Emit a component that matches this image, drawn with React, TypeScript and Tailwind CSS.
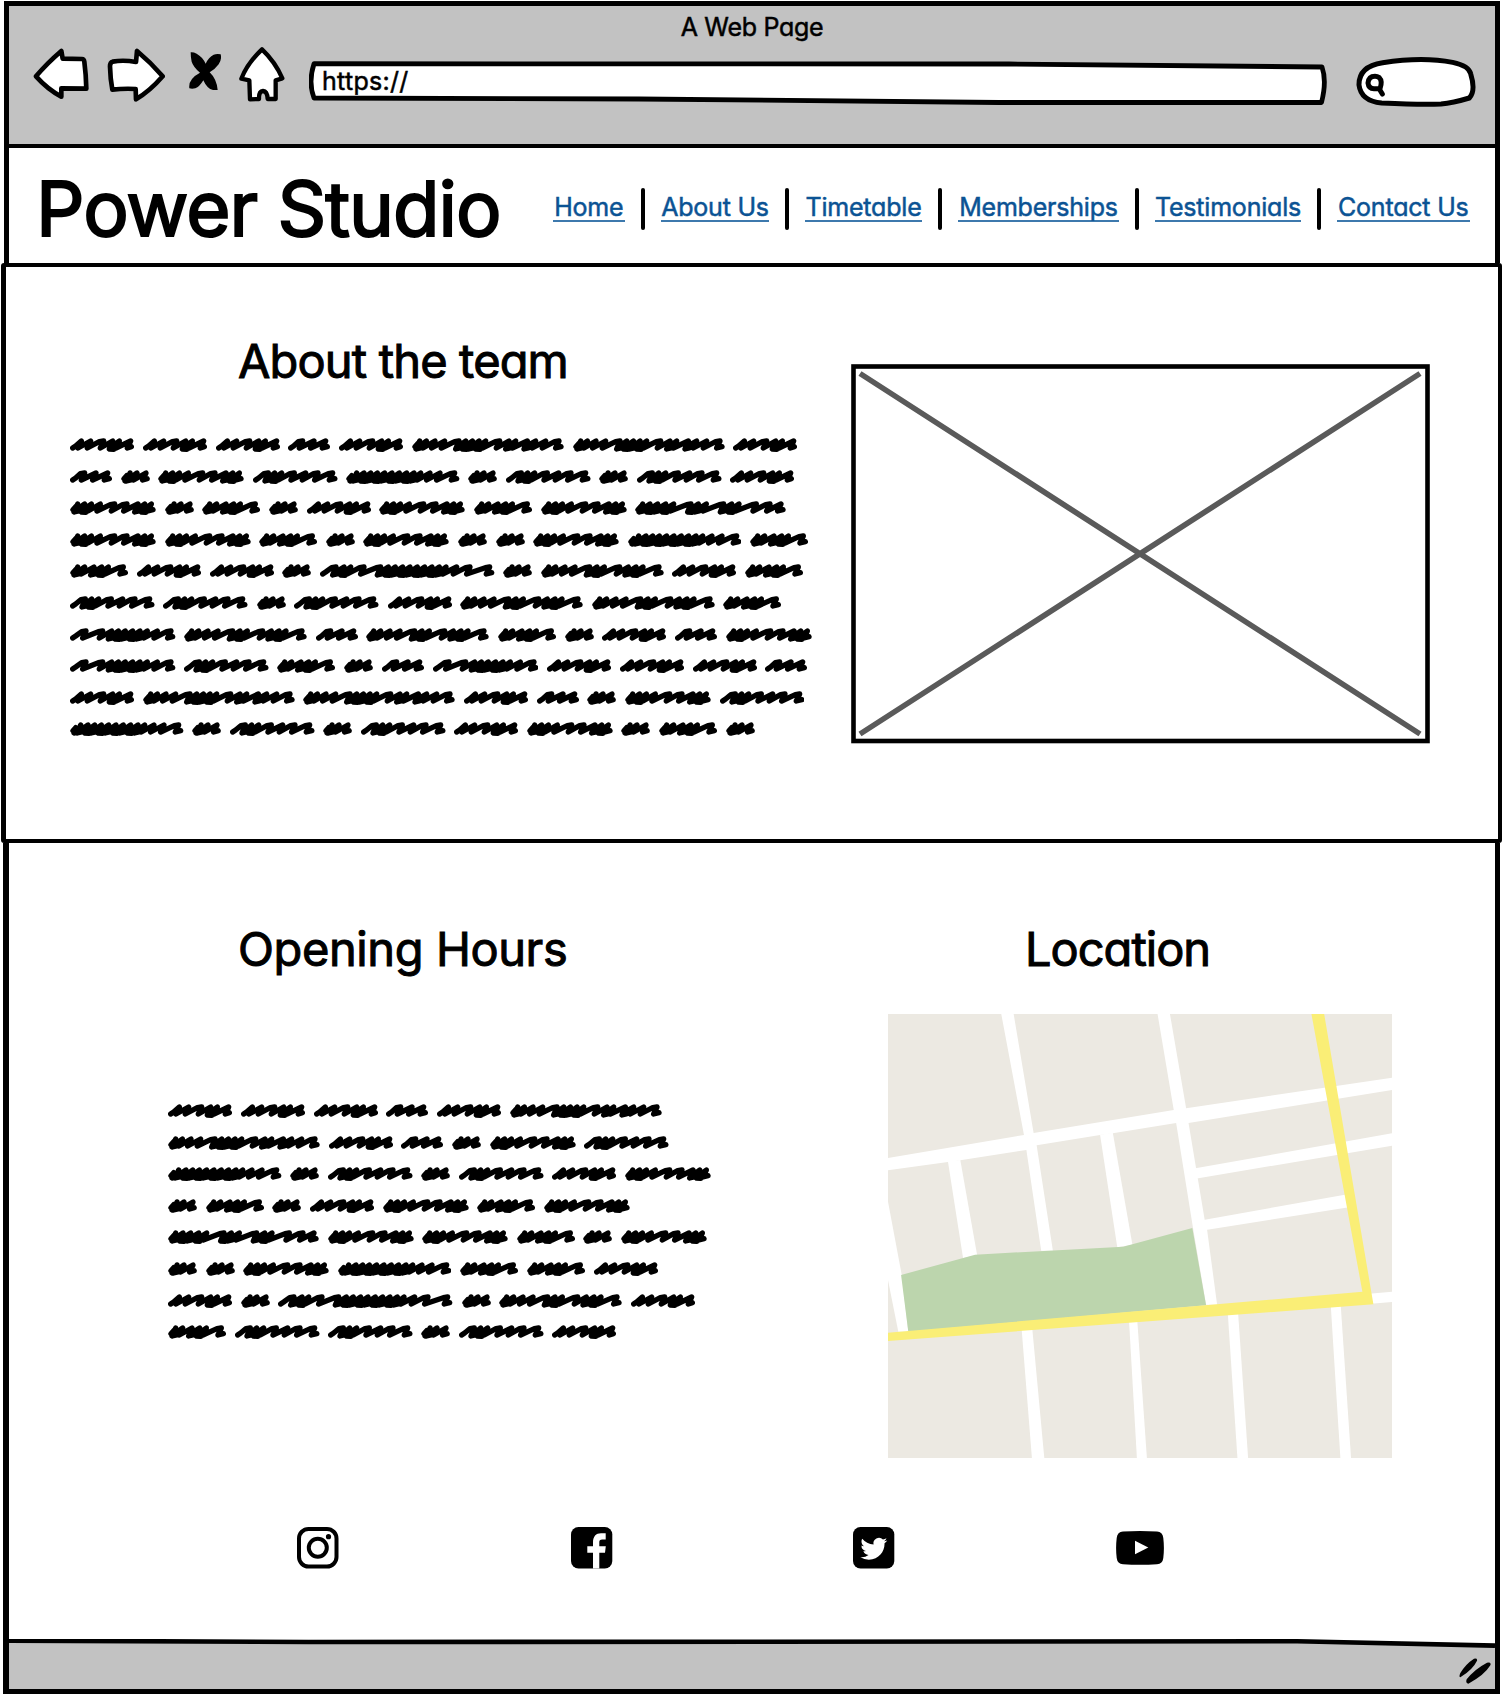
import React from "react";

/* ---------- Scribbled placeholder words ---------- */

// Each word: [width, x positions of the pen's upstroke peaks], in thirds of a pixel.
const WORDS: Record<string, [number, number[]]> = {
  A: [193, [34, 62, 101, 128, 148, 182]],
  B: [127, [44, 78, 113]],
  C: [87.5, [27, 48, 75]],
  D: [258, [23, 44, 64, 91, 134, 171, 204, 224, 244]],
  E: [254.5, [46, 65, 86, 124, 158, 195, 239]],
  F: [341, [32, 54, 74, 94, 116, 138, 160, 182, 204, 224, 252, 282, 326]],
  G: [456, [23, 43, 69, 98, 141, 161, 181, 201, 221, 263, 291, 311, 346, 371, 401, 441]],
  H: [175, [23, 44, 72, 95, 115, 160]],
  I: [524, [48, 72, 92, 132, 182, 205, 226, 248, 270, 292, 314, 336, 358, 378, 410, 450, 509]],
  J: [317, [48, 98, 125, 145, 166, 188, 210, 232, 262, 303]],
  K: [369, [23, 44, 72, 102, 146, 168, 190, 236, 262, 285, 306, 354]],
  L: [453, [23, 45, 68, 92, 116, 168, 190, 214, 266, 290, 312, 364, 405, 438]],
};

function wordPath(width: number, peaks: number[]) {
  const dark = peaks[0] < 33;
  let d = dark ? "M9 26 L17 17 L12 33 L24 28" : "M8 30 L17 24";
  let prev = 0;
  peaks.forEach((p, i) => {
    const gap = p - prev;
    if (gap > 36) d += ` L${p - 13} 11`;
    d += ` L${p} 9`;
    const next = peaks[i + 1] ?? width;
    const close = next - p < 26 && i < peaks.length - 1;
    d += ` L${p - 10} ${close ? 33 : 30}`;
    if (close) d += ` L${p + 3} ${i % 2 ? 34 : 30} L${p + 6} 20`;
    prev = p;
  });
  return d + ` L${width - 9} 26`;
}

function Word({ kind }: { kind: string }) {
  const [w, peaks] = WORDS[kind];
  return (
    <svg width={w / 3} height={14} viewBox={`0 0 ${w} 42`} className="shrink-0" aria-hidden>
      <path d={wordPath(w, peaks)} fill="none" stroke="#000" strokeWidth={16} strokeLinejoin="round" strokeLinecap="round" />
    </svg>
  );
}

function Scribble({ rows }: { rows: string[] }) {
  return (
    <div className="flex flex-col">
      {rows.map((row, i) => (
        <div key={i} className="flex h-[31.6px] items-start gap-[8.5px]">
          {row.split("").map((k, j) => (
            <Word key={j} kind={k} />
          ))}
        </div>
      ))}
    </div>
  );
}

const TEAM = ["AAABAGGA", "BCDEFCECEA", "DCHCADHDL", "DDHCDCCDFH", "HAACICKAH", "EECEAKKH", "JKBKHCABD", "JEHCBJAAAB", "AGGABCDE", "FCECEADCHC"];
const HOURS = ["AAABAG", "GABCDE", "FCECEAD", "CHCADHD", "LDDHCD", "CCDFHHA", "ACICKA", "HEECEA"];

/* ---------- Browser chrome ---------- */

function Chrome() {
  return (
    <header className="flex h-[137.5px] flex-col bg-[#c2c2c2]">
      <div className="flex h-[41px] items-center justify-center pt-px text-[25px] leading-none tracking-[-0.3px] [-webkit-text-stroke:0.5px_#000]">A Web Page</div>
      <div className="flex items-start pl-[24px]">
        <svg width="132" height="56" viewBox="99 138 396 168" fill="#fff" stroke="#000" strokeWidth="14" strokeLinejoin="round">
          <path d="M108 226 Q140 188 184 150 L188 173 L246 174 Q252 174 253 182 Q258 220 259 263 L184 262 L184 287 Q142 264 108 226Z" />
          <path d="M488 226 Q452 184 411 150 L408 183 Q370 176 338 182 Q330 184 330 196 Q331 235 337 266 Q372 262 407 264 L408 295 Q450 270 488 226Z" />
        </svg>
        <svg width="32" height="38" viewBox="569 155 96 114" className="ml-[24px] mt-[4.5px]">
          <path d="M574 156 Q582 155 592 160 Q610 170 619 190 Q628 170 643 163 Q652 160 664 162 Q668 178 658 192 Q648 206 631 216 Q652 236 655 269 Q636 272 625 260 Q616 250 612 240 Q600 260 588 264 Q578 266 570 264 Q568 248 578 236 Q588 224 602 217 Q582 200 577 184 Q574 172 574 156Z" />
        </svg>
        <svg width="46" height="55" viewBox="717 137 138 165" className="ml-[18px]" fill="#fff" stroke="#000" strokeWidth="13" strokeLinejoin="round" strokeLinecap="round">
          <path d="M786 144 Q826 182 847 231 L827 237 L827 293 L803 293 Q802 270 789 269 Q776 270 777 293 L750 294 L748 237 L724 232 Q742 186 786 144Z" />
        </svg>
        <div className="relative ml-[24px] mt-[14px] h-[46px] w-[1018px]">
          <svg className="absolute inset-0" width="1018" height="46" viewBox="0 0 1018 46" fill="#fff" stroke="#000" strokeWidth="4.8" strokeLinejoin="round">
            <path d="M5 2.7 L700 3 L1013 6 Q1018 20 1012.5 41.5 L690 41.5 L330 38 L5 37 Q-1 21 5 2.7Z" />
          </svg>
          <span className="relative ml-[13px] block pt-[8px] text-[25px] leading-none tracking-[0.3px] [-webkit-text-stroke:0.5px_#000]">https://</span>
        </div>
        <svg width="122" height="52" viewBox="1067 167 366 156" className="ml-[28px] mt-[9px]" fill="#fff" stroke="#000" strokeWidth="15" strokeLinejoin="round" strokeLinecap="round">
          <path d="M1147 308 Q1085 302 1079 254 Q1078 198 1150 187 Q1270 168 1360 186 Q1408 196 1414 220 Q1430 272 1410 293 Q1360 308 1325 311 Q1270 314 1147 308Z" />
          <path d="M1127 228 Q1108 228 1106 248 Q1108 266 1126 265 L1142 265 Q1150 242 1140 232 Q1134 228 1127 228Z M1140 266 L1149 281" strokeWidth="15" />
        </svg>
      </div>
    </header>
  );
}

/* ---------- Site header ---------- */

function NavLink({ label, width, last }: { label: string; width: number; last?: boolean }) {
  return (
    <>
      <a className="-mt-[2px] flex h-[27px] items-start justify-center whitespace-nowrap border-b-2 border-[#3d79ad] text-[25px] leading-[25px] tracking-[-0.2px] text-[#0b5394] [-webkit-text-stroke:0.5px_#0b5394]" style={{ width }}>
        {label}
      </a>
      {!last && <span className="h-[42px] w-[4px] rounded-full bg-black" />}
    </>
  );
}

function SiteHeader() {
  return (
    <div className="flex h-[115px] items-start">
      <h1 className="ml-[27px] mt-[21px] w-[503.5px] whitespace-nowrap text-[76px] leading-[79px] tracking-[-1px] [-webkit-text-stroke:2px_#000]">Power Studio</h1>
      <nav className="ml-[13px] mt-[40px] flex items-center gap-[16px]">
        <NavLink label="Home" width={72.5} />
        <NavLink label="About Us" width={108} />
        <NavLink label="Timetable" width={117} />
        <NavLink label="Memberships" width={161} />
        <NavLink label="Testimonials" width={146} />
        <NavLink label="Contact Us" width={132.5} last />
      </nav>
    </div>
  );
}

/* ---------- Location map ---------- */

function StreetMap() {
  return (
    <svg width="504" height="444" viewBox="52 42 1464 1332" preserveAspectRatio="none">
      <rect x="52" y="42" width="1464" height="1332" fill="#ece9e2" />
      <g fill="#fff">
        <path d="M381 42H417L475 399L484 437L531 752H497L454 450L447 405Z" />
        <path d="M835 42H871L918 325L925 369L972 660L979 690L1008 914H976L938 684L889 369L882 330Z" />
        <path d="M52 474L447 405L475 399L882 330L918 325L1516 233V270L925 369L889 369L705 400L668 405L484 436L454 450L262 481L226 486L52 511Z" />
        <path d="M226 484L262 480L311 766L270 774Z" />
        <path d="M668 404L705 398L762 734L718 742Z" />
        <path d="M945 505L1516 400V437L945 536Z" />
        <path d="M968 660L1379 584L1400 620L975 690Z" />
        <path d="M52 605L92 825L111 995H82L52 840Z" />
        <path d="M1450 881L1516 875V906L1455 911Z" />
        <path d="M440 985H471L506 1374H470Z" />
        <path d="M752 960H776L804 1374H775Z" />
        <path d="M1039 940H1069L1098 1374H1067Z" />
        <path d="M1338 915H1367L1397 1374H1366Z" />
      </g>
      <path fill="#bcd5ad" d="M90 825L305 764L735 740L936 684L976 916L111 995Z" />
      <path fill="#faee76" d="M52 998L1430 875L1282 42H1319L1462 913L52 1023Z" />
    </svg>
  );
}

/* ---------- Social icons ---------- */

function Instagram() {
  return (
    <svg width="42" height="42" viewBox="0 0 42 42" fill="none" stroke="#000">
      <rect x="2" y="2" width="37.5" height="37.5" rx="9.5" strokeWidth="4" />
      <circle cx="20.8" cy="20.8" r="9" strokeWidth="4" />
      <circle cx="31.5" cy="9.7" r="2.6" fill="#000" stroke="none" />
    </svg>
  );
}

function Facebook() {
  return (
    <svg width="42" height="42" viewBox="0 0 42 42">
      <rect width="41.3" height="41.5" rx="7.5" />
      <path fill="#fff" d="M22 41.5V25.7H16.3V19.2H22V15.5C22 9.5 25 6.3 30 6.3H34.7V12.4H31.2C29 12.4 28.3 13.4 28.3 15.2V19.2H34.8L34 25.7H28.3V41.5Z" />
    </svg>
  );
}

function Twitter() {
  return (
    <svg width="42" height="42" viewBox="0 0 42 42">
      <rect width="41.3" height="41.5" rx="7.5" />
      <path
        fill="#fff"
        transform="translate(7.4 8.3) scale(1.12)"
        d="M23.95 4.57a10 10 0 0 1-2.82.77 4.96 4.96 0 0 0 2.16-2.72c-.95.55-2 .95-3.13 1.18a4.92 4.92 0 0 0-8.38 4.48C7.69 8.1 4.07 6.13 1.64 3.16a4.82 4.82 0 0 0-.67 2.48c0 1.71.87 3.21 2.19 4.1a4.9 4.9 0 0 1-2.23-.62v.06a4.92 4.92 0 0 0 3.95 4.83 5 5 0 0 1-2.21.08 4.94 4.94 0 0 0 4.6 3.42A9.87 9.87 0 0 1 0 19.54a14 14 0 0 0 7.55 2.21c9.05 0 14-7.5 14-13.98 0-.21 0-.42-.02-.63a9.94 9.94 0 0 0 2.46-2.55z"
      />
    </svg>
  );
}

function YouTube() {
  return (
    <svg width="48" height="34" viewBox="0 0 48 34">
      <path d="M7 .6Q24-.6 41 .6Q46.6 1 47.3 7Q48.5 17 47.3 27Q46.6 32.8 41 33.2Q24 34.4 7 33.2Q1.4 32.8.7 27Q-.5 17 .7 7Q1.4 1 7 .6Z" />
      <path fill="#fff" d="M19 9.7L32.3 16.6L19 23.3Z" />
    </svg>
  );
}

/* ---------- Page ---------- */

function HeaderRule() {
  return <div className="h-[4.5px] shrink-0 bg-black" />;
}

export default function App() {
  return (
    <div className="flex h-[1696px] w-[1502px] flex-col overflow-hidden bg-white pt-px font-['Inter',sans-serif] text-black antialiased [font-feature-settings:'cv11']">
      <div className="ml-[4px] mr-[2px] flex flex-col border-x-[5px] border-t-[5px] border-black">
        <Chrome />
        <HeaderRule />
        <SiteHeader />
      </div>

      <section className="ml-px flex h-[580px] items-start rounded-[3px] border-[5px] border-b-[4px] border-r-[4px] border-t-[4px] border-black">
        <div className="ml-[64px] mt-[65px] w-[760px]">
          <h2 className="ml-[168px] whitespace-nowrap text-[47px] leading-[58px] tracking-[-0.85px] [-webkit-text-stroke:1px_#000]">About the team</h2>
          <div className="mt-[48px]">
            <Scribble rows={TEAM} />
          </div>
        </div>
        <svg width="579" height="380" viewBox="0 0 579 380" className="ml-[20.5px] mt-[97px]" fill="none">
          <rect x="2.5" y="2.5" width="574" height="374.5" stroke="#000" strokeWidth="4.6" />
          <path d="M9 9.5L569 370M569 9.5L9 370" stroke="#5a5a5a" strokeWidth="5.6" />
        </svg>
      </section>

      <div className="ml-[3px] mr-[2px] flex h-[851px] flex-col border-b-[5px] border-l-[6px] border-r-[5px] border-black">
        <div className="flex h-[664px] items-start">
          <div className="w-[720px]">
            <h2 className="ml-[229px] mt-[77px] whitespace-nowrap text-[47px] leading-[58px] tracking-[-0.4px] [-webkit-text-stroke:1px_#000]">Opening Hours</h2>
            <div className="ml-[159px] mt-[126px]">
              <Scribble rows={HOURS} />
            </div>
          </div>
          <div className="ml-[159px] w-[504px]">
            <h2 className="ml-[137px] mt-[77px] whitespace-nowrap text-[47px] leading-[58px] tracking-[-1px] [-webkit-text-stroke:1px_#000]">Location</h2>
            <div className="mt-[36px]">
              <StreetMap />
            </div>
          </div>
        </div>
        <div className="mt-[20px] flex h-[42px] items-center pl-[288px]">
          <Instagram />
          <div className="ml-[232px]">
            <Facebook />
          </div>
          <div className="ml-[240px]">
            <Twitter />
          </div>
          <div className="ml-[221px]">
            <YouTube />
          </div>
        </div>
        <footer className="relative mt-auto flex h-[50px] items-end justify-end bg-[#c2c2c2]">
          <svg className="absolute inset-x-0 top-0 w-full" height="10" viewBox="0 0 1488 10" preserveAspectRatio="none">
            <path d="M0 0H1488V6L1290 2L0 3Z" fill="#fff" />
            <path d="M0 1.6L300 3L1290 2.3L1488 6.6" fill="none" stroke="#000" strokeWidth="4.6" />
          </svg>
          <svg width="32" height="26" viewBox="476 174 96 78" className="mb-[5px] mr-[4px]">
            <path d="M521 176Q532 174 530 182Q518 208 480 232Q475 230 480 219Q496 192 521 176Z M560 188Q574 186 570 196Q552 226 504 251Q495 250 499 238Q522 208 560 188Z" />
          </svg>
        </footer>
      </div>
    </div>
  );
}
